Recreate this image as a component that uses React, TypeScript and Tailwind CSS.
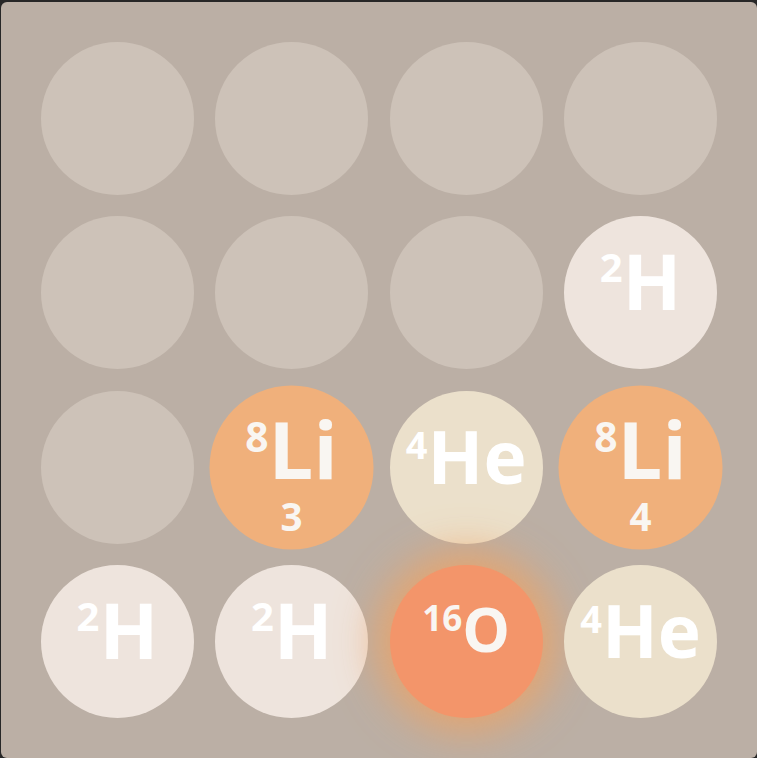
import React from "react";

type Kind = "h" | "he" | "li" | "o";

interface Tile {
  mass: string;
  symbol: string;
  sub?: string;
  kind: Kind;
  pop?: boolean;
}

// full class strings per tile kind so tailwind can see them
const kindStyles: Record<Kind, { circle: string; row: string; mass: string; symbol: string }> = {
  h: {
    circle: "bg-[#eee4dd] text-white",
    row: "-translate-y-[12px]",
    mass: "text-[40px] mt-[5px]",
    symbol: "text-[77px]",
  },
  he: {
    circle: "bg-[#ebe0cb] text-white",
    row: "-translate-y-[12px]",
    mass: "text-[38px] mt-[6px]",
    symbol: "text-[73px]",
  },
  li: {
    circle: "bg-[#f0b07b] text-[#f9f6f2]",
    row: "-translate-y-[17px]",
    mass: "text-[38px] mt-[6px]",
    symbol: "text-[74px]",
  },
  o: {
    circle: "bg-[#f3956a] text-[#f9f6f2] shadow-[0_0_42px_14px_rgba(240,162,98,0.8)]",
    row: "-translate-y-[13px]",
    mass: "text-[35px] mt-[1px]",
    symbol: "text-[60px]",
  },
};

const H: Tile = { mass: "2", symbol: "H", kind: "h" };
const He: Tile = { mass: "4", symbol: "He", kind: "he" };

const board: (Tile | null)[] = [
  null, null, null, null,
  null, null, null, H,
  null, { mass: "8", symbol: "Li", sub: "3", kind: "li", pop: true }, He, { mass: "8", symbol: "Li", sub: "4", kind: "li", pop: true },
  H, H, { mass: "16", symbol: "O", kind: "o" }, He,
];

const Cell = ({ tile }: { tile: Tile | null }) => {
  if (!tile) {
    return <div className="aspect-square w-full rounded-full bg-[#cdc2b8]" />;
  }
  const s = kindStyles[tile.kind];
  return (
    <div
      className={`relative aspect-square w-full rounded-full flex items-center justify-center font-bold ${s.circle} ${
        tile.pop ? "scale-[1.072]" : ""
      }`}
    >
      <div className={`flex items-start leading-none ${s.row}`}>
        <span className={s.mass}>{tile.mass}</span>
        <span className={s.symbol}>{tile.symbol}</span>
      </div>
      {tile.sub && (
        <span className="absolute top-[108px] left-0 right-0 text-center text-[36px] leading-[30px]">
          {tile.sub}
        </span>
      )}
    </div>
  );
};

export default function App() {
  return (
    <div
      className="w-[757px] h-[758px] bg-[#272727] pl-[1px] pt-[2px] overflow-hidden"
      style={{ fontFamily: '"Open Sans", "Noto Sans", sans-serif' }}
    >
      <div className="w-[756px] h-[756px] rounded-[6px] bg-[#bbafa5] p-[40px] grid grid-cols-4 gap-[21.5px] content-start">
        {board.map((tile, i) => (
          <Cell key={i} tile={tile} />
        ))}
      </div>
    </div>
  );
}
